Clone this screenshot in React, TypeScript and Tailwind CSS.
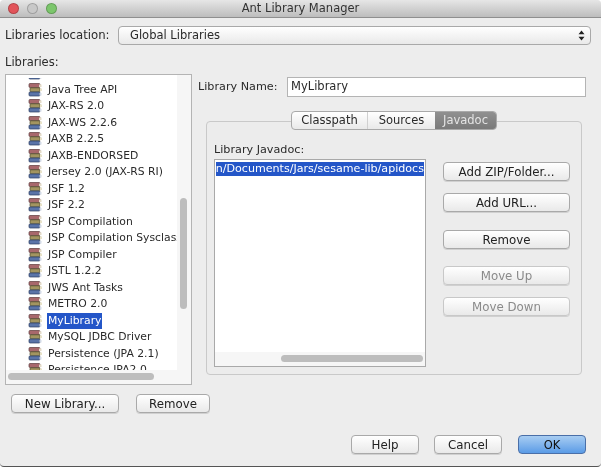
import type { ReactNode } from "react";

const libraries = [
  "JavaServer",
  "Java Tree API",
  "JAX-RS 2.0",
  "JAX-WS 2.2.6",
  "JAXB 2.2.5",
  "JAXB-ENDORSED",
  "Jersey 2.0 (JAX-RS RI)",
  "JSF 1.2",
  "JSF 2.2",
  "JSP Compilation",
  "JSP Compilation Sysclass",
  "JSP Compiler",
  "JSTL 1.2.2",
  "JWS Ant Tasks",
  "METRO 2.0",
  "MyLibrary",
  "MySQL JDBC Driver",
  "Persistence (JPA 2.1)",
  "Persistence JPA2.0",
];

function BooksIcon() {
  return (
    <svg width="15" height="14" viewBox="0 0 15 14" className="shrink-0">
      <rect x="1" y="0.5" width="11" height="4" rx="1" fill="#a8686c" stroke="#5c3a3a" strokeWidth="0.7" />
      <rect x="11" y="1.5" width="2.5" height="2.5" fill="#e4dcc8" />
      <rect x="2" y="4.8" width="10" height="4" rx="1" fill="#a39560" stroke="#4e4a2c" strokeWidth="0.7" />
      <rect x="12" y="5.5" width="2" height="2.5" fill="#e8e2c8" />
      <rect x="1" y="9" width="11" height="4" rx="1" fill="#5a74a8" stroke="#2c3c60" strokeWidth="0.7" />
      <rect x="11.5" y="10" width="2" height="2.5" fill="#d4dce8" />
    </svg>
  );
}

function Btn({ children, w, disabled }: { children: ReactNode; w: string; disabled?: boolean }) {
  return (
    <button
      className={
        "h-[19px] rounded-[4px] border border-[#a9a9a9] bg-gradient-to-b from-white to-[#e9e9e9] text-center text-[11.8px] leading-[16px] shadow-[0_1px_0_#d0d0d0] " +
        w +
        (disabled ? " border-[#c8c8c8] text-[#8a8a8a]" : " text-[#222]")
      }
    >
      {children}
    </button>
  );
}

function Light({ color }: { color: string }) {
  return <div className={"h-[11px] w-[11px] rounded-full border border-black/20 " + color} />;
}

export default function App() {
  return (
    <div className="h-[469px] w-[601px] overflow-hidden bg-white font-['DejaVu_Sans',sans-serif] text-[11.5px] text-[#2a2a2a] blur-[0.3px]">
      <div className="flex h-[467px] flex-col rounded-[4px] border-b border-[#555] bg-[#ededed]">
        {/* Title bar */}
        <div className="relative flex h-[18px] shrink-0 items-center gap-[8px] rounded-t-[4px] border-b border-[#8f8f8f] bg-gradient-to-b from-[#e6e6e6] to-[#bdbdbd] pl-[8px]">
          <Light color="bg-[#e2545a]" />
          <Light color="bg-[#c8c8c8]" />
          <Light color="bg-[#7cc66c]" />
          <div className="absolute inset-0 text-center text-[11.5px] leading-[17px] text-[#333]">Ant Library Manager</div>
        </div>

        {/* Libraries location */}
        <div className="mt-[8px] flex h-[19px] items-center pl-[5px] pr-[10px]">
          <span className="w-[113px] text-[11.7px]">Libraries location:</span>
          <div className="flex h-[19px] flex-1 items-center justify-between rounded-[4px] border border-[#a9a9a9] bg-gradient-to-b from-white to-[#e9e9e9] pl-[11px] pr-[5px]">
            <span>Global Libraries</span>
            <svg width="7" height="11" viewBox="0 0 7 11">
              <path d="M3.5 0.5 L6.5 4.2 H0.5 Z M3.5 10.5 L0.5 6.8 H6.5 Z" fill="#222" />
            </svg>
          </div>
        </div>

        <div className="mt-[11px] h-[12px] pl-[5px] leading-[12px]">Libraries:</div>

        <div className="mt-[6px] flex pl-[5px]">
          {/* Left column */}
          <div className="w-[205px] shrink-0">
            <div className="relative h-[311px] w-[187px] overflow-hidden border border-[#b4b4b4] bg-white">
              <div className="-mt-[10px] flex flex-col pl-[22px] text-[10.8px]">
                {libraries.map((name) => (
                  <div key={name} className="flex h-[16.5px] shrink-0 items-center gap-[4px]">
                    <BooksIcon />
                    <span
                      className={
                        "whitespace-nowrap px-[1px] leading-[16px] " +
                        (name === "MyLibrary" ? "bg-[#2456c8] text-white" : "")
                      }
                    >
                      {name}
                    </span>
                  </div>
                ))}
              </div>
              {/* List inset hides the top of the scrolled-off row */}
              <div className="absolute left-0 right-0 top-0 h-[3px] bg-white" />
              {/* Scrollbars */}
              <div className="absolute bottom-0 right-0 top-0 w-[14px] bg-[#f6f6f6]">
                <div className="absolute left-[3px] top-[123px] h-[111px] w-[7px] rounded-full bg-[#bdbdbd]" />
              </div>
              <div className="absolute bottom-0 left-0 right-0 h-[14px] bg-[#f6f6f6]">
                <div className="absolute left-[2px] top-[3px] h-[7px] w-[146px] rounded-full bg-[#bdbdbd]" />
              </div>
            </div>
            <div className="ml-[6px] mt-[9px] flex gap-[17px]">
              <Btn w="w-[108px]">New Library...</Btn>
              <Btn w="w-[74px]">Remove</Btn>
            </div>
          </div>

          {/* Right column */}
          <div className="mt-[3px] flex-1 pr-[15px]">
            <div className="-ml-[17px] flex h-[20px] items-center pl-[5px]">
              <span className="w-[89px] text-[11.2px]">Library Name:</span>
              <div className="flex h-[20px] w-[299px] items-center border border-[#b4b4b4] bg-white pl-[3px]">MyLibrary</div>
            </div>

            <div className="relative -ml-[4px] mt-[24px] h-[254px] w-[376px] rounded-[4px] border border-[#c9c9c9] bg-[#ececec]">
              <div className="absolute -top-[11px] left-[84px] flex h-[19px] w-[206px] overflow-hidden rounded-[4px] border border-[#a9a9a9] bg-gradient-to-b from-white to-[#e9e9e9] text-center leading-[16px]">
                <span className="w-[76px] border-r border-[#d0d0d0]">Classpath</span>
                <span className="w-[67px]">Sources</span>
                <span className="flex-1 bg-gradient-to-b from-[#909090] to-[#7a7a7a] text-[#e4e4e4]">Javadoc</span>
              </div>

              <div className="ml-[7px] mt-[22px] text-[11.2px] leading-[12px]">Library Javadoc:</div>
              <div className="ml-[7px] mt-[3px] flex">
                <div className="relative h-[208px] w-[212px] overflow-hidden border border-[#a9a9a9] bg-white">
                  <div className="ml-[1px] mt-[2px] flex h-[14px] w-[208px] items-center justify-end overflow-hidden whitespace-nowrap bg-[#2456c8] text-[11.1px] text-white">
                    n/Documents/Jars/sesame-lib/apidocs
                  </div>
                  <div className="absolute bottom-0 left-0 right-0 h-[14px] bg-[#f6f6f6]">
                    <div className="absolute left-[66px] top-[3px] h-[7px] w-[142px] rounded-full bg-[#bdbdbd]" />
                  </div>
                </div>
                <div className="ml-[17px] mt-[3px] flex w-[127px] flex-col">
                  <Btn w="w-full">Add ZIP/Folder...</Btn>
                  <div className="mt-[12px]"><Btn w="w-full">Add URL...</Btn></div>
                  <div className="mt-[18px]"><Btn w="w-full">Remove</Btn></div>
                  <div className="mt-[17px]"><Btn w="w-full" disabled>Move Up</Btn></div>
                  <div className="mt-[12px]"><Btn w="w-full" disabled>Move Down</Btn></div>
                </div>
              </div>
            </div>
          </div>
        </div>

        {/* Footer */}
        <div className="mt-[22px] flex justify-end pr-[15px]">
          <Btn w="w-[68px]">Help</Btn>
          <div className="ml-[15px]"><Btn w="w-[68px]">Cancel</Btn></div>
          <button className="ml-[16px] h-[19px] w-[68px] rounded-[4px] border border-[#4a6fa8] bg-gradient-to-b from-[#a8cdf2] to-[#5a9be6] leading-[16px] text-[#111]">
            OK
          </button>
        </div>
      </div>
    </div>
  );
}
